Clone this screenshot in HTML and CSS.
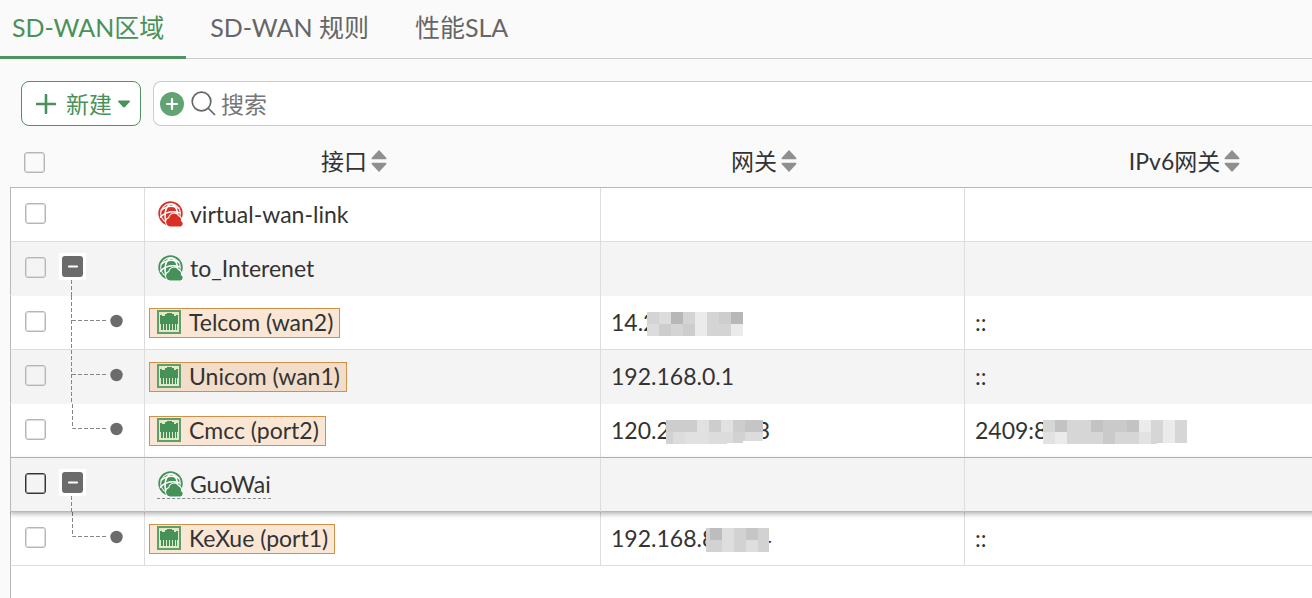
FILE: index.html
```html
<!DOCTYPE html>
<html lang="zh-CN">
<head>
    <meta charset="UTF-8">
    <meta name="viewport" content="width=device-width, initial-scale=1.0">
    <title>SD-WAN区域</title>
    <link rel="stylesheet" href="styles.css">
</head>
<body>
    <!-- 图标定义 -->
    <svg class="icon-defs" aria-hidden="true">
        <symbol id="icon-zone" viewBox="0 0 26 26">
            <circle cx="13.500" cy="12.500" r="11.300" fill="none" stroke="currentColor" stroke-width="1.800"/>
            <circle cx="13.500" cy="12.500" r="9.300" fill="currentColor"/>
            <g class="globe-grid" fill="none" stroke-width="1.500">
                <path d="M4 9.500C9 5 16 4 22.500 7.500M3 16.500c5-5 12-7 20-4.500"/>
                <path d="M14 2.500C8 6 6.500 14 9.500 22M14 2.500c5 2.500 7 7 6.500 13"/>
            </g>
            <path class="cloud" stroke-width="2" d="M13 25.400a4.300 4.300 0 0 1-.8-8.400 4.900 4.900 0 0 1 9.200-1.800 3.600 3.600 0 0 1 2.400 4.700 2.900 2.900 0 0 1-.2 5.500z"/>
        </symbol>
        <symbol id="icon-port" viewBox="0 0 24 24">
            <rect x="1" y="1" width="22" height="22" fill="#e3e8c6" stroke="#5ea06c" stroke-width="2"/>
            <path fill="currentColor" d="M3 5h2v1h3V4h2V3h5v1h2v2h2V5h2v9h-1v6H4v-6H3z"/>
            <path stroke="#e3e8c6" stroke-width="1" d="M6.500 14v6M9.500 14v6M12.500 14v6M15.500 14v6M18.500 14v6"/>
        </symbol>
        <symbol id="icon-sort" viewBox="0 0 16 22">
            <path fill="#8f8f8f" d="M8 0l7 7.500c.8 1 .6 1.800-.5 1.800h-13C.4 9.300.2 8.500 1 7.500zM8 22l7-7.500c.8-1 .6-1.800-.5-1.800h-13c-1.100 0-1.300.8-.5 1.800z"/>
        </symbol>
        <symbol id="icon-minus" viewBox="0 0 21 21">
            <rect width="21" height="21" rx="3" fill="#6b6b6b"/>
            <path d="M7 10.500h8" stroke="#fff" stroke-width="2.200" stroke-linecap="round"/>
        </symbol>
        <symbol id="tree-start" viewBox="0 0 66 54">
            <path class="tree-line" d="M12.500 38v16"/>
        </symbol>
        <symbol id="tree-mid" viewBox="0 0 66 54">
            <path class="tree-line" d="M12.500 0v54M13 24.500h35"/>
            <circle cx="57.500" cy="25" r="6.200" fill="#6b6b6b"/>
        </symbol>
        <symbol id="tree-end" viewBox="0 0 66 54">
            <path class="tree-line" d="M13.500 0v24.500h35"/>
            <circle cx="57.500" cy="25" r="6.200" fill="#6b6b6b"/>
        </symbol>
    </svg>

    <nav class="tabs">
        <a href="#zones" class="tab active">SD-WAN区域</a>
        <a href="#rules" class="tab">SD-WAN 规则</a>
        <a href="#sla" class="tab">性能SLA</a>
    </nav>

    <div class="toolbar">
        <button type="button" class="create-btn">
            <svg width="20" height="20" viewBox="0 0 20 20"><path d="M10 1v18M1 10h18" stroke="currentColor" stroke-width="2.600" stroke-linecap="round"/></svg>
            <span>新建</span>
            <svg class="caret" width="12" height="8" viewBox="0 0 12 8"><path d="M1 .5h10c1 0 1.200.8.6 1.500L7 7c-.6.600-1.400.600-2 0L.4 2C-.2 1.300 0 .5 1 .5z" fill="currentColor"/></svg>
        </button>
        <div class="search-box">
            <button type="button" class="filter-btn" aria-label="添加过滤">
                <svg width="24" height="24" viewBox="0 0 24 24"><circle cx="12" cy="12" r="12" fill="#62a373"/><path d="M12 7v10M7 12h10" stroke="#fff" stroke-width="2.200" stroke-linecap="round"/></svg>
            </button>
            <svg width="25" height="25" viewBox="0 0 25 25" fill="none" stroke="#666" stroke-width="1.700"><circle cx="10.500" cy="10.500" r="9.300"/><path d="M17 17l7 7"/></svg>
            <input type="text" placeholder="搜索" aria-label="搜索">
        </div>
    </div>

    <div class="table-wrap">
        <table class="zone-table">
            <colgroup>
                <col class="col-select">
                <col class="col-interface">
                <col class="col-gateway">
                <col>
            </colgroup>
            <thead>
                <tr>
                    <th class="select-head"><input type="checkbox" aria-label="全选"></th>
                    <th><div class="head">接口<svg width="16" height="22"><use href="#icon-sort"/></svg></div></th>
                    <th><div class="head">网关<svg width="16" height="22"><use href="#icon-sort"/></svg></div></th>
                    <th><div class="head">IPv6网关<svg width="16" height="22"><use href="#icon-sort"/></svg></div></th>
                </tr>
            </thead>
            <tbody>
                <tr>
                    <td><div class="select"><input type="checkbox" aria-label="virtual-wan-link"></div></td>
                    <td><span class="item zone down"><svg width="26" height="26"><use href="#icon-zone"/></svg>virtual-wan-link</span></td>
                    <td></td>
                    <td></td>
                </tr>
                <tr>
                    <td><div class="select"><input type="checkbox" aria-label="to_Interenet"><div class="tree"><svg width="66" height="54"><use href="#tree-start"/></svg><button type="button" class="toggle" aria-label="折叠"><svg width="21" height="21"><use href="#icon-minus"/></svg></button></div></div></td>
                    <td><span class="item zone"><svg width="26" height="26"><use href="#icon-zone"/></svg>to_Interenet</span></td>
                    <td></td>
                    <td></td>
                </tr>
                <tr>
                    <td><div class="select"><input type="checkbox" aria-label="Telcom (wan2)"><div class="tree"><svg width="66" height="54"><use href="#tree-mid"/></svg></div></div></td>
                    <td><span class="item port"><svg width="24" height="24"><use href="#icon-port"/></svg>Telcom (wan2)</span></td>
                    <td>
                        <div class="value">14.2<svg class="mask cut" width="96" height="24" shape-rendering="crispEdges">
                            <path fill="#d4d4d4" d="M0 0h96v24H0z"/>
                            <path fill="#dcdcdc" d="M12 0h12v12H12zM0 12h12v12H0z"/>
                            <path fill="#b7b7b7" d="M24 0h12v12H24zM84 0h12v12H84z"/>
                            <path fill="#ebebeb" d="M48 0h12v24H48zM84 12h12v12H84z"/>
                            <path fill="#cdcdcd" d="M12 12h12v12H12zM36 12h12v12H36zM72 0h12v12H72z"/>
                        </svg></div>
                    </td>
                    <td><div class="value">::</div></td>
                </tr>
                <tr>
                    <td><div class="select"><input type="checkbox" aria-label="Unicom (wan1)"><div class="tree"><svg width="66" height="54"><use href="#tree-mid"/></svg></div></div></td>
                    <td><span class="item port"><svg width="24" height="24"><use href="#icon-port"/></svg>Unicom (wan1)</span></td>
                    <td><div class="value">192.168.0.1</div></td>
                    <td><div class="value">::</div></td>
                </tr>
                <tr>
                    <td><div class="select"><input type="checkbox" aria-label="Cmcc (port2)"><div class="tree"><svg width="66" height="54"><use href="#tree-end"/></svg></div></div></td>
                    <td><span class="item port"><svg width="24" height="24"><use href="#icon-port"/></svg>Cmcc (port2)</span></td>
                    <td>
                        <div class="value">120.2<svg class="mask" width="97" height="24" shape-rendering="crispEdges">
                            <path fill="#cdcdcd" d="M0 0h97v12H0z"/>
                            <path fill="#dcdcdc" d="M0 12h97v9H77v2H61v1H0z"/>
                            <path fill="#e1e1e1" d="M31 0h12v24H31zM55 0h12v12H55zM19 12h12v12H19z"/>
                            <path fill="#c5c5c5" d="M79 0h18v12H79z"/>
                            <path fill="#d2d2d2" d="M0 12h7v12H0zM67 12h12v9h-2v2H67z"/>
                        </svg><span class="tail">3</span></div>
                    </td>
                    <td>
                        <div class="value">2409:8<svg class="mask" width="144" height="24" shape-rendering="crispEdges">
                            <path fill="#d6d6d6" d="M0 0h144v23h-30v1H0z"/>
                            <path fill="#c3c3c3" d="M12 0h12v12H12zM48 0h12v12H48zM84 0h12v12H84z"/>
                            <path fill="#cacaca" d="M60 0h24v12H60zM60 12h12v12H60z"/>
                            <path fill="#ebebeb" d="M12 12h12v12H12zM96 0h12v12H96zM120 0h12v23h-12z"/>
                            <path fill="#e2e2e2" d="M0 12h12v12H0zM96 12h12v12H96z"/>
                        </svg></div>
                    </td>
                </tr>
                <tr class="current">
                    <td><div class="select"><input type="checkbox" aria-label="GuoWai"><div class="tree"><svg width="66" height="54"><use href="#tree-start"/></svg><button type="button" class="toggle" aria-label="折叠"><svg width="21" height="21"><use href="#icon-minus"/></svg></button></div></div></td>
                    <td><span class="item zone linked"><svg width="26" height="26"><use href="#icon-zone"/></svg>GuoWai</span></td>
                    <td></td>
                    <td></td>
                </tr>
                <tr>
                    <td><div class="select"><input type="checkbox" aria-label="KeXue (port1)"><div class="tree"><svg width="66" height="54"><use href="#tree-end"/></svg></div></div></td>
                    <td><span class="item port"><svg width="24" height="24"><use href="#icon-port"/></svg>KeXue (port1)</span></td>
                    <td>
                        <div class="value">192.168.8<svg class="mask cut" width="63" height="24" shape-rendering="crispEdges">
                            <path fill="#d2d2d2" d="M0 0h63v24H0z"/>
                            <path fill="#bdbdbd" d="M4 0h12v12H4z"/>
                            <path fill="#dedede" d="M16 0h12v24H16zM40 12h12v12H40z"/>
                            <path fill="#c6c6c6" d="M40 0h12v12H40z"/>
                        </svg><span class="tail narrow">4</span></div>
                    </td>
                    <td><div class="value">::</div></td>
                </tr>
            </tbody>
        </table>
        <div class="table-rest"></div>
    </div>
</body>
</html>
```
FILE: styles.css
```css
* {
    box-sizing: border-box;
}
body {
    display: flex;
    flex-direction: column;
    min-height: 100vh;
    margin: 0;
    overflow-x: hidden;
    background-color: #fafafa;
    color: #333;
    font-family: Lato, "Noto Sans CJK SC", sans-serif;
    font-size: 23px;
    line-height: 28px;
}
button,
input {
    font: inherit;
    margin: 0;
}
svg {
    display: block;
    flex: none;
}
.icon-defs {
    position: absolute;
    width: 0;
    height: 0;
}

/* 标签栏 */
.tabs {
    display: flex;
    height: 59px;
    border-bottom: 1px solid #ccc;
}
.tab {
    height: 59px;
    padding: 0 22px 0 24px;
    border-bottom: 3px solid transparent;
    color: #666;
    font-size: 25px;
    line-height: 54px;
    text-decoration: none;
    white-space: nowrap;
}
.tab:first-child {
    padding-left: 12px;
}
.tab.active {
    border-color: #4f9460;
    color: #4a9159;
}

/* 工具栏 */
.toolbar {
    display: flex;
    gap: 12px;
    padding: 22px 0 11px 21px;
}
.create-btn {
    display: flex;
    align-items: center;
    gap: 10px;
    height: 45px;
    padding: 0 10px 0 14px;
    border: 1px solid #4f9460;
    border-radius: 8px;
    background-color: #fff;
    color: #4a9159;
    white-space: nowrap;
}
.caret {
    margin-left: -4px;
}
.search-box {
    display: flex;
    flex: 1;
    align-items: center;
    gap: 7px;
    height: 45px;
    padding-left: 6px;
    border: 1px solid #ccc;
    border-right: none;
    border-radius: 8px 0 0 8px;
    background-color: #fff;
}
.filter-btn {
    padding: 0;
    border: none;
    background: none;
}
.search-box input {
    flex: 1;
    min-width: 0;
    margin-left: -2px;
    padding: 0;
    border: none;
    outline: none;
    background: none;
}
.search-box input::placeholder {
    color: #757575;
}

/* 表格 */
.table-wrap {
    display: flex;
    flex: 1;
    flex-direction: column;
    margin-left: 10px;
    overflow: hidden;
}
.zone-table {
    width: 110%;
    table-layout: fixed;
    border-spacing: 0;
}
.col-select {
    width: 135px;
}
.col-interface {
    width: 456px;
}
.col-gateway {
    width: 364px;
}
th {
    height: 51px;
    padding: 0 38px 2px 0;
    border-bottom: 1px solid #b8b8b8;
    font-weight: normal;
}
.select-head {
    padding: 0 0 0 14px;
    text-align: left;
}
.head {
    display: flex;
    align-items: center;
    justify-content: center;
    gap: 4px;
}
td {
    height: 54px;
    padding: 0 0 0 4px;
    border-right: 1px solid #ddd;
    border-bottom: 1px solid #ddd;
    background-color: #fff;
}
td:first-child {
    padding: 0 0 0 14px;
    border-left: 1px solid #b8b8b8;
}
tbody tr:nth-child(even) td {
    border-bottom-color: #f4f4f4;
    background-color: #f4f4f4;
}
tbody tr:nth-child(5) td {
    border-bottom-color: #b8b8b8;
}
.current {
    position: relative;
    box-shadow: 0 2px 5px rgba(0, 0, 0, 0.3);
}
tbody .current:nth-child(even) td {
    border-bottom-color: #b8b8b8;
}
.table-rest {
    flex: 1;
    border-left: 1px solid #b8b8b8;
    background-color: #fff;
}

input[type="checkbox"] {
    display: block;
    flex: none;
    width: 21px;
    height: 21px;
    appearance: none;
    border: 1px solid #b5b5b5;
    border-radius: 3px;
    box-shadow: inset 0 0 0 1px #ddd;
}
.current input[type="checkbox"] {
    border-color: #333;
    box-shadow: inset 0 0 0 1px #999;
}
.select {
    display: flex;
    gap: 13px;
    height: 53px;
}
.select input[type="checkbox"] {
    margin-top: 15px;
}
.tree {
    display: grid;
    align-items: start;
    height: 53px;
}
.tree > * {
    grid-area: 1 / 1;
}
.tree-line {
    fill: none;
    stroke: #858585;
    stroke-dasharray: 4 2;
}
.toggle {
    width: 27px;
    height: 27px;
    margin-top: 11px;
    padding: 3px;
    border: none;
    background-color: #fff;
}

/* 接口 */
.item {
    display: flex;
    align-items: center;
    gap: 8px;
    width: fit-content;
    height: 30px;
    padding-bottom: 2px;
    border: 1px solid transparent;
    white-space: nowrap;
}
.item svg {
    color: #459157;
}
.zone {
    gap: 7px;
    margin-left: 8px;
    border: none;
}
.zone.down svg {
    color: #d93025;
}
.globe-grid {
    stroke: #fff;
}
.cloud {
    fill: currentColor;
    stroke: #fff;
    paint-order: stroke;
}
.linked {
    height: 28px;
    padding-bottom: 0;
    border-bottom: 1px dashed #888;
}
.port {
    padding: 0 6px 2px 7px;
    border-color: #cf914a;
    background-color: #fae6d4;
}
tr:nth-child(even) .port {
    background-color: #f2ddcb;
}
.value {
    display: flex;
    align-items: center;
    padding: 0 0 2px 6px;
    white-space: nowrap;
}
.mask {
    position: relative;
    margin: 4px 0 0 -4px;
}
.mask.cut {
    margin-left: -9px;
}
.tail {
    margin-left: -6px;
}
.tail.narrow {
    margin-left: -11px;
}
```
